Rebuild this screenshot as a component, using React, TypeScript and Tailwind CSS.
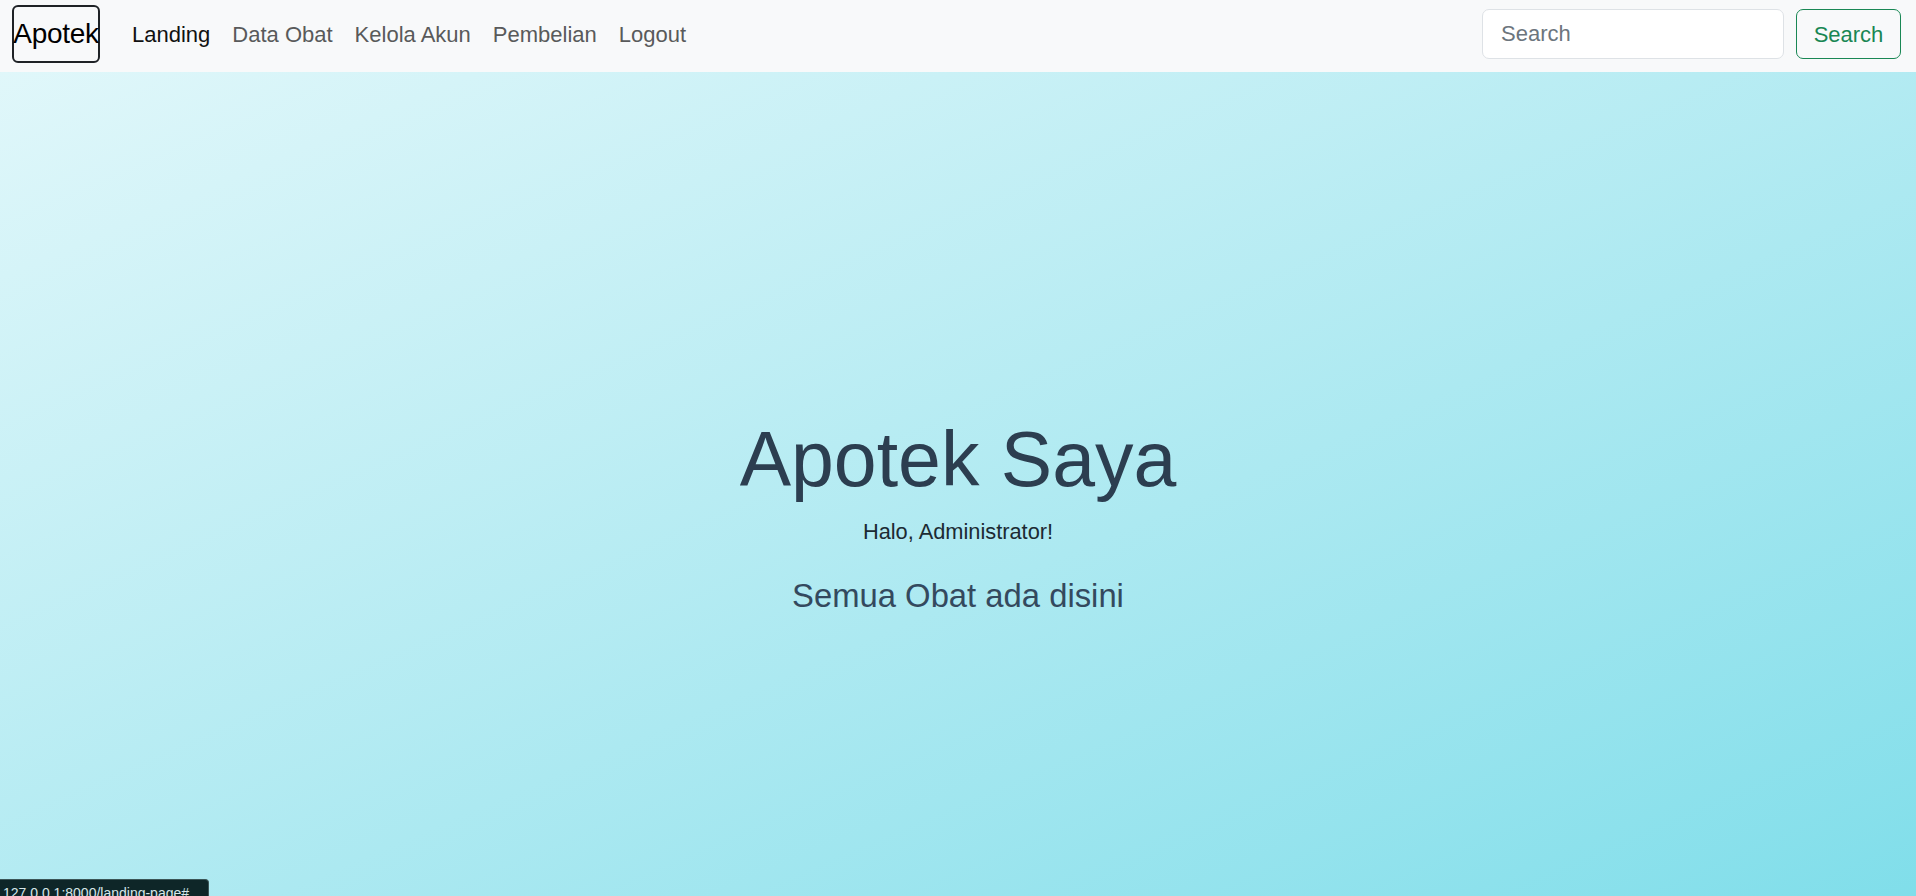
import React from 'react';

const navLinks = [
  { label: 'Landing', active: true },
  { label: 'Data Obat', active: false },
  { label: 'Kelola Akun', active: false },
  { label: 'Pembelian', active: false },
  { label: 'Logout', active: false },
];

const Navbar: React.FC = () => {
  return (
    <nav className="h-[72px] bg-[#f8f9fa] flex items-center pl-3 pr-[15px] pb-1">
      <a
        href="#"
        className="w-[88px] h-[58px] border-2 border-[#1f2226] rounded-[6px] flex items-center justify-center text-[28px] text-black tracking-[-0.3px]"
      >
        Apotek
      </a>
      <ul className="flex items-center ml-[21px]">
        {navLinks.map((link) => (
          <li key={link.label}>
            <a
              href="#"
              className={
                link.active
                  ? 'px-[11px] text-[22px] text-[#111111]'
                  : 'px-[11px] text-[22px] text-[#595a5b]'
              }
            >
              {link.label}
            </a>
          </li>
        ))}
      </ul>
      <form className="ml-auto flex items-center gap-3" onSubmit={(e) => e.preventDefault()}>
        <input
          type="search"
          placeholder="Search"
          className="w-[302px] h-[50px] bg-white border border-[#dee2e6] rounded-[7px] px-[18px] text-[22px] text-[#212529] placeholder:text-[#6c757d] outline-none"
        />
        <button
          type="submit"
          className="w-[105px] h-[50px] border border-[#198754] rounded-[7px] text-[22px] text-[#198754] bg-transparent"
        >
          Search
        </button>
      </form>
    </nav>
  );
};

const App: React.FC = () => {
  return (
    <div className="relative min-h-[896px] font-['Liberation_Sans',Arial,sans-serif]">
      <Navbar />
      <main className="h-[824px] bg-linear-to-br from-[#e0f7fa] to-[#80deea] flex flex-col items-center justify-center pt-[60px]">
        <h1 className="text-[77px] leading-[1.2] text-[#2c3e50]">Apotek Saya</h1>
        <p className="mt-[11px] text-[21.8px] leading-[1.5] text-[#1c2a33]">Halo, Administrator!</p>
        <p className="mt-[27px] text-[32.8px] leading-[1.2] text-[#34495e]">Semua Obat ada disini</p>
      </main>

      {/* browser status bubble */}
      <div className="absolute left-0 bottom-0 h-[17px] w-[209px] overflow-hidden bg-[#0e2628] border border-[#3b5557] border-l-0 border-b-0 rounded-tr-[4px] pl-[3px] pt-[6px] text-[14px] leading-none text-[#d6e6e8]">
        127.0.0.1:8000/landing-page#
      </div>
    </div>
  );
};

export default App;
